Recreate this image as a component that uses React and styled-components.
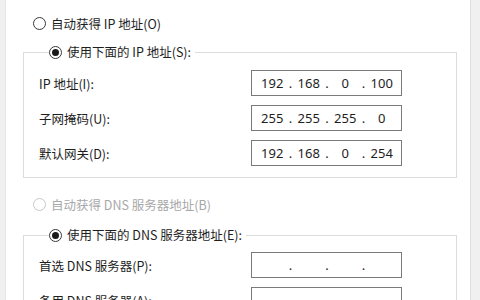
import React from "react";
import styled, { createGlobalStyle } from "styled-components";

const Global = createGlobalStyle`
  html, body { margin: 0; padding: 0; background: #fff; }
  body { width: 480px; height: 300px; overflow: hidden; }
`;

const Page = styled.div`
  display: flex;
  width: 480px;
  height: 300px;
  overflow: hidden;
  background: #fff;
  font-family: "Noto Sans CJK SC", "Noto Sans", sans-serif;
  font-size: 12.5px;
  color: #1e1e1e;
`;

const SideStrip = styled.div`
  flex: 0 0 ${(p) => p.$w}px;
  background: #f0f0f0;
  ${(p) => (p.$right ? "border-left: 1px solid #dedede;" : "border-right: 1px solid #e6e6e6;")}
`;

const Content = styled.div`
  flex: 1;
  display: flex;
  flex-direction: column;
  padding-top: 14px;
`;

const RadioRow = styled.label`
  display: flex;
  align-items: center;
  gap: 5px;
  height: 18px;
  padding-left: ${(p) => p.$indent || 0}px;
  color: ${(p) => (p.$disabled ? "#a8a8a8" : "#1e1e1e")};
  white-space: nowrap;
  margin-top: ${(p) => p.$mt || 0}px;
`;

const RadioDot = styled.span`
  box-sizing: border-box;
  width: 13px;
  height: 13px;
  border-radius: 50%;
  border: 1px solid ${(p) => (p.$disabled ? "#c8c8c8" : "#3a3a3a")};
  background: #fff;
  display: flex;
  align-items: center;
  justify-content: center;
  flex: none;
  &::after {
    content: "";
    width: 7px;
    height: 7px;
    border-radius: 50%;
    background: ${(p) => (p.$checked ? "#1a1a1a" : "transparent")};
  }
`;

const Group = styled.fieldset`
  margin: ${(p) => p.$mt || 0}px 0 0 17px;
  width: 434px;
  box-sizing: border-box;
  border: 1px solid #dcdcdc;
  padding: ${(p) => p.$pt}px 0 11px 15px;
  display: grid;
  grid-template-columns: 212px 151px;
  row-gap: 9px;
  align-items: center;
`;

const Legend = styled.legend`
  padding: 0 4px 0 0;
  margin-left: 10px;
  line-height: 18px;
`;

const FieldLabel = styled.span`
  white-space: nowrap;
`;

const IpBox = styled.div`
  box-sizing: border-box;
  height: 26px;
  width: 151px;
  border: 1px solid #7a7a7a;
  display: flex;
  align-items: center;
  padding-left: 5px;
  font-family: "Noto Sans", "Open Sans", sans-serif;
  font-size: 13px;
  color: #1e1e1e;
`;

const Octet = styled.span`
  width: 30.5px;
  text-align: center;
`;

const Dot = styled.span`
  width: 6px;
  text-align: center;
`;

function Radio({ checked, disabled, children, indent, mt }) {
  return (
    <RadioRow $disabled={disabled} $indent={indent} $mt={mt}>
      <RadioDot $checked={checked} $disabled={disabled} />
      <span>{children}</span>
    </RadioRow>
  );
}

function IpField({ value }) {
  const parts = value ? value.split(".") : ["", "", "", ""];
  return (
    <IpBox>
      {parts.map((p, i) => (
        <React.Fragment key={i}>
          <Octet>{p}</Octet>
          {i < 3 && <Dot>.</Dot>}
        </React.Fragment>
      ))}
    </IpBox>
  );
}

export default function App() {
  return (
    <>
      <Global />
      <Page>
        <SideStrip $w={5} />
        <Content>
          <Radio indent={27}>自动获得 IP 地址(O)</Radio>
          <Group $mt={11} $pt={9}>
            <Legend>
              <Radio checked>使用下面的 IP 地址(S):</Radio>
            </Legend>
            <FieldLabel>IP 地址(I):</FieldLabel>
            <IpField value="192.168.0.100" />
            <FieldLabel>子网掩码(U):</FieldLabel>
            <IpField value="255.255.255.0" />
            <FieldLabel>默认网关(D):</FieldLabel>
            <IpField value="192.168.0.254" />
          </Group>
          <Radio indent={27} disabled mt={17}>自动获得 DNS 服务器地址(B)</Radio>
          <Group $mt={13} $pt={8}>
            <Legend>
              <Radio checked>使用下面的 DNS 服务器地址(E):</Radio>
            </Legend>
            <FieldLabel>首选 DNS 服务器(P):</FieldLabel>
            <IpField />
            <FieldLabel>备用 DNS 服务器(A):</FieldLabel>
            <IpField />
          </Group>
        </Content>
        <SideStrip $w={9} $right />
      </Page>
    </>
  );
}
